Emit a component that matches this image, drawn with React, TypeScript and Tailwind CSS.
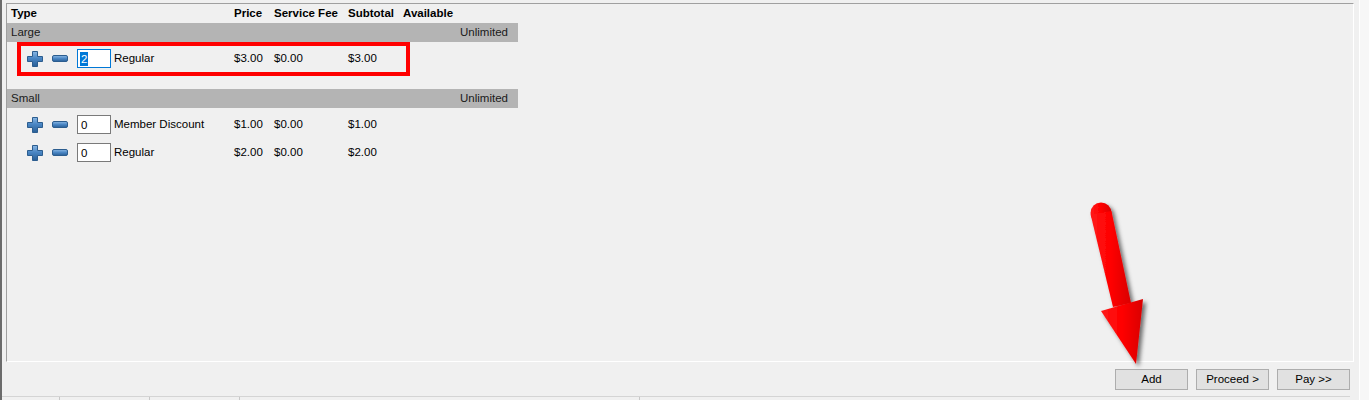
import React from "react";

type Row = { qty: string; label: string; price: string; fee: string; subtotal: string; focused?: boolean };
type Group = { name: string; available: string; rows: Row[] };

const groups: Group[] = [
  {
    name: "Large",
    available: "Unlimited",
    rows: [{ qty: "2", label: "Regular", price: "$3.00", fee: "$0.00", subtotal: "$3.00", focused: true }],
  },
  {
    name: "Small",
    available: "Unlimited",
    rows: [
      { qty: "0", label: "Member Discount", price: "$1.00", fee: "$0.00", subtotal: "$1.00" },
      { qty: "0", label: "Regular", price: "$2.00", fee: "$0.00", subtotal: "$2.00" },
    ],
  },
];

const PlusIcon = () => (
  <svg width="16" height="16" viewBox="0 0 16 16" className="shrink-0">
    <defs>
      <linearGradient id="pg" x1="0" y1="0" x2="0" y2="1">
        <stop offset="0" stopColor="#8bb8e4" />
        <stop offset="0.45" stopColor="#4a86c4" />
        <stop offset="1" stopColor="#2a5f96" />
      </linearGradient>
    </defs>
    <path
      d="M5.5 0.5h5v5h5v5h-5v5h-5v-5h-5v-5h5z"
      fill="url(#pg)"
      stroke="#2c5d8f"
      strokeWidth="1"
      strokeLinejoin="round"
    />
  </svg>
);

const MinusIcon = () => (
  <svg width="16" height="7" viewBox="0 0 16 7" className="shrink-0">
    <defs>
      <linearGradient id="mg" x1="0" y1="0" x2="0" y2="1">
        <stop offset="0" stopColor="#8bb8e4" />
        <stop offset="0.5" stopColor="#4a86c4" />
        <stop offset="1" stopColor="#2a5f96" />
      </linearGradient>
    </defs>
    <rect x="0.5" y="0.5" width="15" height="6" rx="1.5" fill="url(#mg)" stroke="#2c5d8f" />
  </svg>
);

const Arrow = () => (
  <svg
    className="pointer-events-none absolute left-[1080px] top-[190px]"
    width="80"
    height="185"
    viewBox="1080 190 80 185"
  >
    <defs>
      <filter id="sh" x="-30%" y="-10%" width="160%" height="130%">
        <feDropShadow dx="3" dy="3" stdDeviation="2.2" floodColor="#000" floodOpacity="0.55" />
      </filter>
      <linearGradient id="ag" x1="0" y1="0" x2="1" y2="0">
        <stop offset="0" stopColor="#ff1a1a" />
        <stop offset="0.5" stopColor="#ff0000" />
        <stop offset="1" stopColor="#d90000" />
      </linearGradient>
    </defs>
    <g filter="url(#sh)" fill="url(#ag)">
      <circle cx="1101" cy="213" r="10.5" />
      <path d="M1090.6 214.5 L1111.4 211 L1131 303 L1113 307 Z" />
      <path d="M1101 311 L1143 299 L1136 364 Z" />
    </g>
  </svg>
);

const QtyBox = ({ value, focused }: { value: string; focused?: boolean }) => (
  <div
    className={`flex h-[19px] w-[34px] shrink-0 items-center bg-white pl-[2px] ${
      focused ? "border border-[#0078d7]" : "border border-[#7a7a7a]"
    }`}
  >
    {focused ? (
      <span className="bg-[#0078d7] px-[1px] leading-[14px] text-white">{value}</span>
    ) : (
      <span className="px-[1px] leading-[14px]">{value}</span>
    )}
  </div>
);

export default function App() {
  return (
    <div
      className="relative flex h-[400px] w-[1369px] overflow-hidden bg-[#f0f0f0] text-[11.5px] text-black"
      style={{ fontFamily: '"Liberation Sans", Arial, sans-serif' }}
    >
      <div className="w-[2px] shrink-0 bg-[#6b6b6b]" />

      <div className="flex w-[1357px] shrink-0 flex-col pl-[4px] pr-[9px]">
        <div className="mt-[3px] h-[359px] w-[1348px] border-b border-l border-r border-t border-b-white border-l-[#a0a0a0] border-r-white border-t-[#a0a0a0]">
          <div className="w-[511px]">
            <div className="flex h-[19px] items-center pt-[1px] font-bold">
              <div className="w-[227px] pl-[4px]">Type</div>
              <div className="w-[40px]">Price</div>
              <div className="w-[74px]">Service Fee</div>
              <div className="w-[55px]">Subtotal</div>
              <div>Available</div>
            </div>

            {groups.map((g, gi) => (
              <div key={g.name} className={gi === 0 ? "pb-[12px]" : ""}>
                <div className="flex h-[19px] items-center justify-between bg-[#b4b4b4] pl-[4px] pr-[10px] pt-[1px] text-[#1a1a1a]">
                  <span>{g.name}</span>
                  <span>{g.available}</span>
                </div>
                <div className="pt-[7px]">
                  {g.rows.map((r, ri) => (
                    <div key={ri} className="mb-[9px] flex h-[19px] items-center">
                      <div className="flex w-[227px] items-center pl-[20px]">
                        <PlusIcon />
                        <div className="ml-[9px]">
                          <MinusIcon />
                        </div>
                        <div className="ml-[9px]">
                          <QtyBox value={r.qty} focused={r.focused} />
                        </div>
                        <span className="ml-[3px] whitespace-nowrap pt-[1px]">{r.label}</span>
                      </div>
                      <div className="w-[40px] pt-[1px]">{r.price}</div>
                      <div className="w-[74px] pt-[1px]">{r.fee}</div>
                      <div className="w-[55px] pt-[1px]">{r.subtotal}</div>
                    </div>
                  ))}
                </div>
              </div>
            ))}
          </div>
        </div>

        <div className="mt-[7px] flex h-[21px] justify-end gap-[8px]">
          {["Add", "Proceed >", "Pay >>"].map((b) => (
            <button
              key={b}
              type="button"
              className="h-[21px] w-[73px] border border-[#adadad] bg-[#e1e1e1] text-[11.5px] text-black"
            >
              {b}
            </button>
          ))}
        </div>

        <div className="-ml-[4px] mt-[6px] flex h-[4px] border-t border-[#d4d4d4]">
          <div className="w-[58px] border-r border-[#c8c8c8]" />
          <div className="w-[90px] border-r border-[#c8c8c8]" />
          <div className="w-[90px] border-r border-[#c8c8c8]" />
          <div className="w-[400px] border-r border-[#c8c8c8]" />
        </div>
      </div>

      <div className="flex-1 border-l border-white bg-[#f7f7f7]" />

      <div className="pointer-events-none absolute left-[17px] top-[42px] h-[34px] w-[393px] border-[4px] border-[#ff0000]" />

      <Arrow />
    </div>
  );
}
